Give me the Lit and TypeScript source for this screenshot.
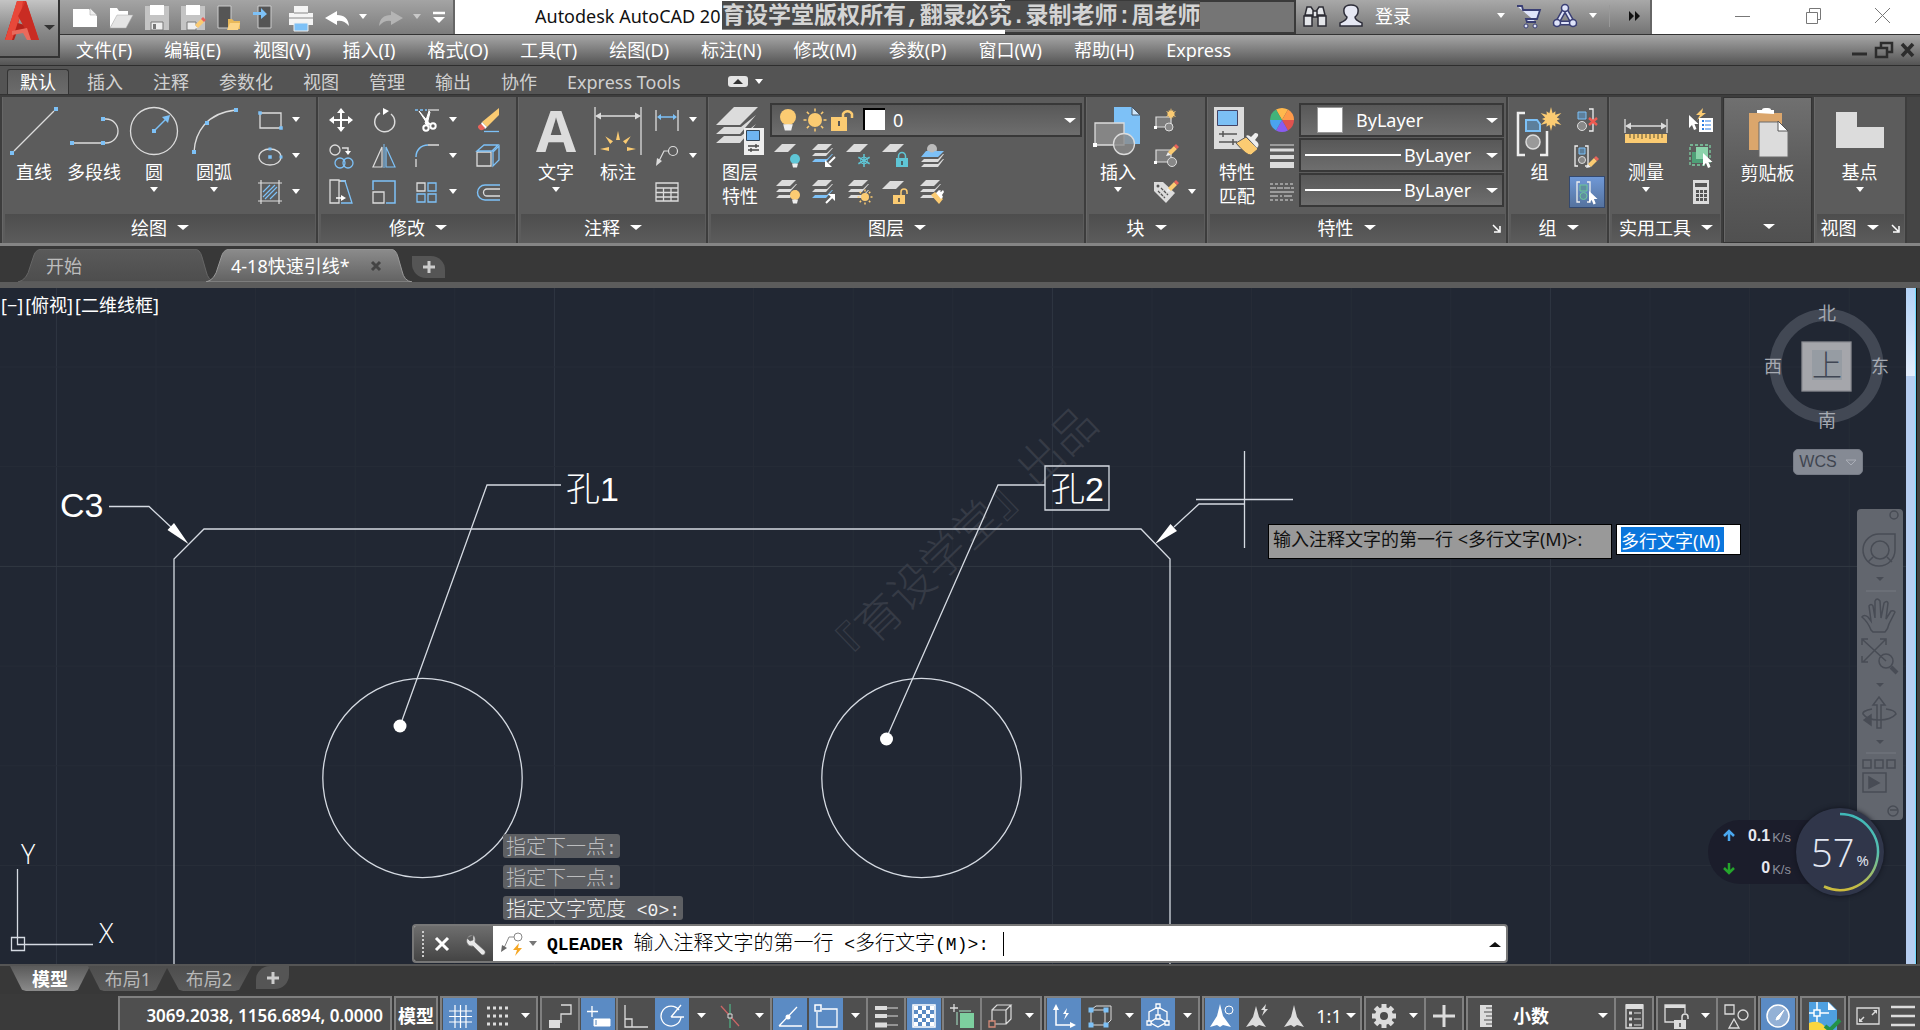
import { LitElement, html, svg, css, nothing, TemplateResult, SVGTemplateResult } from "lit";
import { customElement, state } from "lit/decorators.js";
import { classMap } from "lit/directives/class-map.js";

const W = "#dcdcdc";
const B = "#7dc1f7";
const Y = "#fbcb72";

const sq = (x: number, y: number, s = 4) =>
  svg`<rect x=${x - s / 2} y=${y - s / 2} width=${s} height=${s} fill=${B}/>`;

const sheet = (x: number, y: number, fill = W, w = 14) =>
  svg`<path d="M${x + 6} ${y}h${w}l-8 8h-${w}z" fill=${fill}/>`;

const stack = (x: number, y: number, mid = W, low = W) => svg`
  <path d="M${x + 6} ${y}h14l-6 6h-14z" fill=${W}/>
  <path d="M${x} ${y + 12}l3-3h12l5-5h1l-7 8z" fill=${mid}/>
  <path d="M${x} ${y + 18}l3-3h12l5-5h1l-7 8z" fill=${low}/>`;

const pencil = (x: number, y: number) => svg`
  <path d="M${x} ${y + 12}l2-4 3 3z" fill="#eee"/>
  <path d="M${x + 2} ${y + 8}l6-6 3 3-6 6z" fill=${Y}/>
  <path d="M${x + 8} ${y + 2}l2-2 3 3-2 2z" fill="#e8635a"/>`;

const cursor = (x: number, y: number, s = 1) =>
  svg`<path transform="translate(${x} ${y}) scale(${s})" d="M0 0v13l3-3 2 5 2.500-1-2-5h4z" fill="#fff"/>`;

const burst = (cx: number, cy: number, r: number) => {
  const pts: string[] = [];
  for (let i = 0; i < 24; i++) {
    const q = i % 2 ? r * 0.5 : i % 4 ? r * 0.75 : r;
    const a = (i * Math.PI) / 12;
    pts.push(`${(cx + q * Math.sin(a)).toFixed(1)},${(cy - q * Math.cos(a)).toFixed(1)}`);
  }
  return svg`<polygon points=${pts.join(" ")} fill=${Y}/>`;
};

const sun = (cx: number, cy: number, r: number, ray: number) => svg`
  <circle cx=${cx} cy=${cy} r=${r} fill=${Y}/>
  ${[0, 45, 90, 135, 180, 225, 270, 315].map(
    (a) => svg`<path d="M${cx} ${cy - r - 1.5}v-${ray}" stroke=${Y} stroke-width="1.500" transform="rotate(${a} ${cx} ${cy})"/>`
  )}`;

const lock = (x: number, y: number, c: string, open = false) => svg`
  <rect x=${x} y=${y + 6} width="12" height="9" fill=${c}/>
  <path d=${open ? `M${x + 8} ${y + 6}v-3a3 3 0 0 1 6 0v2` : `M${x + 2.5} ${y + 6}v-2a3.500 3.500 0 0 1 7 0v2`} fill="none" stroke=${c} stroke-width="1.500"/>
  <path d="M${x + 6} ${y + 9}v4" stroke="#444" stroke-width="1.500"/>`;

const bulb = (cx: number, cy: number, r: number, c: string) => svg`
  <circle cx=${cx} cy=${cy} r=${r} fill=${c}/>
  <path d="M${cx - r * 0.6} ${cy + r * 0.9}h${r * 1.2}l-${r * 0.2} ${r * 0.8}h-${r * 0.8}z" fill="#eee"/>`;

const bracketPair = (x: number, y: number, h: number) => svg`
  <path d="M${x + 4} ${y}h-3v${h}h3M${x + 11} ${y}h3v${h}h-3" fill="none" stroke="#eee" stroke-width="1.300"/>`;

const ICONS: Record<string, SVGTemplateResult> = {
  line: svg`<path d="M4 44L44 4" stroke=${W} stroke-width="1.300"/>${sq(46, 2)}${sq(2, 46)}`,
  pline: svg`<path d="M2 36h31M34 12h2a12 12 0 0 1 0 24h-2" fill="none" stroke=${W} stroke-width="1.300"/>${sq(2, 36)}${sq(33, 36)}${sq(33, 12)}`,
  circle: svg`<circle cx="24" cy="24" r="23.500" fill="none" stroke=${W} stroke-width="1.300"/>
    <path d="M24 24L36 12" stroke=${B} stroke-width="1.500"/><path d="M40 8l-2 8-6-6z" fill=${B}/>${sq(24, 24)}`,
  arc: svg`<path d="M4 45C5 26 16 6 46 3" fill="none" stroke=${W} stroke-width="1.300"/>${sq(4, 45)}${sq(17, 16)}${sq(46, 3)}`,
  rect: svg`<path d="M2 5h21v15H2z" fill="none" stroke=${W} stroke-width="1.300"/>${sq(2, 5, 3.5)}${sq(23, 20, 3.5)}`,
  ellipse: svg`<ellipse cx="12" cy="13" rx="11" ry="8" fill="none" stroke=${W} stroke-width="1.300"/>${sq(12, 5, 3)}${sq(12, 13, 3.5)}${sq(23, 13, 3)}`,
  hatch: svg`<path d="M0 3h24M0 21h24M3 0v24M21 0v24" stroke=${W} stroke-width="1.200"/>
    <path d="M5 12l7-7M5 17L17 5M7 19L19 7M12 19l7-7" stroke=${B} stroke-width="1.200"/>`,
  move: svg`<path d="M12 3v18M3 12h18" stroke="#fff" stroke-width="2"/>
    <path d="M12 0l4 5H8zM12 24l4-5H8zM0 12l5-4v8zM24 12l-5-4v8z" fill="#fff"/>`,
  rotate: svg`<path d="M8 5A10 10 0 1 0 19 6" fill="none" stroke=${W} stroke-width="1.500"/><path d="M11 0l6 3-6 4z" fill="#fff"/>`,
  trim: svg`<path d="M0 2h12" stroke=${B} stroke-width="1.300" stroke-dasharray="3 2"/><path d="M13 2h11" stroke=${W} stroke-width="1.300"/>
    <path d="M4 3l11 13-2 1zM14 3l1 1-3 13-2-2z" fill="#fff" stroke="#fff"/><circle cx="11" cy="20" r="2.700" fill="none" stroke="#fff" stroke-width="2"/><circle cx="18" cy="18" r="2.700" fill="none" stroke="#fff" stroke-width="2"/>`,
  erase: svg`<path d="M23 0v7l-12 12-5-5z" fill=${Y}/><path d="M6 14l5 5-2 2-4-5z" fill="#fff"/><path d="M5 16l4 4q-3 4-6 1t2-5z" fill="#e8635a"/><path d="M8 23.500h15" stroke=${B} stroke-width="1.300"/>`,
  copy: svg`<circle cx="6" cy="6" r="5" fill="none" stroke=${W} stroke-width="1.300"/><path d="M13 4h6v4" fill="none" stroke=${W} stroke-width="1.500"/><path d="M16 7h6l-3 4z" fill="#fff"/>
    <circle cx="11" cy="19" r="5" fill="none" stroke=${B} stroke-width="1.300"/><circle cx="19" cy="19" r="5" fill="none" stroke=${B} stroke-width="1.300"/>`,
  mirror: svg`<path d="M10 3v20H1z" fill="none" stroke=${W} stroke-width="1.200"/><path d="M14 3v20h9z" fill="none" stroke=${B} stroke-width="1.200"/><path d="M12 0v24" stroke=${B}/>`,
  fillet: svg`<path d="M1 13C1 6 6 1 13 1" fill="none" stroke=${B} stroke-width="1.500"/><path d="M13 1h11M1 15v8" stroke=${W} stroke-width="1.300"/>`,
  explode: svg`<path d="M1 8h14v14H1z" fill="none" stroke=${W} stroke-width="1.300"/><path d="M1 7l7-6h14l-6 6zM17 8l6-6v14l-6 6z" fill="none" stroke=${B} stroke-width="1.300"/>`,
  stretch: svg`<path d="M10 0H1v23h9zM10 1h7" fill="none" stroke=${W} stroke-width="1.300"/><path d="M12 1h4l7 22H12" fill="none" stroke=${B} stroke-width="1.300"/><path d="M7 18h6" stroke="#fff" stroke-width="1.500"/><path d="M12 15l5 3-5 3z" fill="#fff"/>`,
  scale: svg`<path d="M1 10V1h22v22H14" fill="none" stroke=${B} stroke-width="1.500"/><path d="M1 12h11v11H1z" fill="none" stroke=${W} stroke-width="1.300"/>`,
  array: svg`<path d="M2 3h8v8H2z" fill="none" stroke=${W} stroke-width="1.300"/><path d="M13 3h8v8h-8zM2 14h8v8H2zM13 14h8v8h-8z" fill="none" stroke=${B} stroke-width="1.300"/>`,
  offset: svg`<path d="M24 5H9a7 7 0 0 0 0 15h15" fill="none" stroke=${B} stroke-width="1.400"/><path d="M24 9H11a3.500 3.500 0 0 0 0 7h13" fill="none" stroke=${W} stroke-width="1.300"/>`,
  mtext: svg`<text x="24" y="45" text-anchor="middle" class="glyph-a">A</text>`,
  dim: svg`<path d="M1 0v48M47 0v48M4 9h40" stroke=${W} stroke-width="1.300"/><path d="M1 9l6-3.500v7zM47 9l-6-3.500v7z" fill=${W}/>
    ${[-90, -45, 0, 45, 90].map((a) => svg`<path d="M24 24l2 9h-4z" transform="rotate(${a} 24 42)" fill=${Y}/>`)}`,
  dimlin: svg`<path d="M1 2v21M23 2v21" stroke=${W} stroke-width="1.300"/><path d="M4 9h16" stroke=${B} stroke-width="1.500"/><path d="M2 9l4-3v6zM22 9l-4-3v6z" fill=${B}/>`,
  leader: svg`<circle cx="18" cy="7" r="4.500" fill="none" stroke=${W} stroke-width="1.200"/><path d="M14 7H9L3 19" fill="none" stroke=${W} stroke-width="1.200"/><path d="M1 22l1-8 5 3z" fill=${W}/>`,
  table: svg`<path d="M1 3h22v18H1zM1 8h22M1 12.500h22M1 17h22M8.500 8v13M16 8v13" fill="none" stroke=${W} stroke-width="1.300"/>`,
  layers: svg`<path d="M18 0h24L24 18H0z" fill=${W}/><path d="M0 27l8-7h17l15-12-16 19z" fill=${W}/><path d="M0 36l8-7h17l15-12-16 19z" fill=${W}/>
    <path d="M28 21h20v27H28z" fill="#eee"/><path d="M30.500 23.500h13v10h-13z" fill="#6fb4f0" stroke="#345"/><path d="M32 39h11M32 43h11M40 37v4M35 41v4" stroke="#444" stroke-width="1.300"/>`,
  bulbBig: svg`${bulb(12, 9, 8, Y)}`,
  sunBig: svg`${sun(12, 12, 7, 3)}`,
  unlockBig: svg`<path d="M1 9h16v14H1z" fill=${Y}/><path d="M13 9V6a5 5 0 0 1 9 0v4" fill="none" stroke=${Y} stroke-width="2.500"/><path d="M9 13v5" stroke="#555" stroke-width="2"/>`,
  layOff: svg`${sheet(0, 0)}${bulb(19, 15, 5, "#5fc6d6")}`,
  layIso: svg`${stack(0, 0, W, B)}<path d="M23 13l-6 6" stroke="#fff" stroke-width="2"/><path d="M13 23v-7l7 7z" fill="#fff"/>`,
  layFrz: svg`${sheet(0, 0)}${[0, 60, 120].map((a) => svg`<path d="M16 10v13" transform="rotate(${a} 16 16.500)" stroke="#5fc6d6" stroke-width="1.500"/>`)}<circle cx="16" cy="16.500" r="3.500" fill="none" stroke="#5fc6d6"/>`,
  layLock: svg`${sheet(0, 0)}${lock(12, 8, "#5fc6d6")}`,
  layCur: svg`<circle cx="12" cy="5" r="5" fill="#bbb"/><path d="M1 13l5-6h3q3 3 6 0h9l-6 6z" fill=${B}/><path d="M1 18l3-3h14l5-5h1l-6 8zM1 23l3-3h14l5-5h1l-6 8z" fill=${W}/>`,
  layOn: svg`${stack(0, 0)}${bulb(19, 15, 5, Y)}`,
  layUniso: svg`${stack(0, 0, W, B)}<path d="M14 23l6-6" stroke="#fff" stroke-width="2"/><path d="M23 14v7l-7-7z" fill="#fff"/>`,
  layThw: svg`${stack(0, 0)}${sun(17, 17, 4, 2)}`,
  layUnlk: svg`${sheet(0, 1)}${lock(9, 9, Y, true)}`,
  layMatch: svg`${stack(0, 0)}<path d="M11 15l4-3 8 7-4 5z" fill=${Y}/><path d="M16 13l3-3 2 2 2-2 1 2-2 3 1 2-2 2z" fill="#fff"/>`,
  insert: svg`<path d="M20 0h18l8 8v29H20z" fill=${B}/><path d="M38 0v8h8z" fill="#cfe6fa" stroke="#456"/><path d="M1 16h29v22H1z" fill="#858585" stroke=${W} stroke-width="1.300"/>
    <circle cx="30" cy="37" r="10.500" fill="#8a8a8a" fill-opacity=".8" stroke=${W} stroke-width="1.300"/><path d="M-1 36h4v4h-4z" fill="#fff"/>`,
  blkNew: svg`<path d="M2 9h15v10H2z" fill="#7d7d7d" stroke=${W} stroke-width="1.200"/><circle cx="15" cy="19" r="4" fill="#888" stroke=${W}/><path d="M0 18h3v3H0z" fill="#fff"/>${burst(17, 6, 6)}`,
  blkEdit: svg`<path d="M2 6h15v12H2z" fill="#7d7d7d" stroke=${W} stroke-width="1.200"/><circle cx="18" cy="18" r="4.500" fill="#888" stroke=${W}/><path d="M0 17h3v3H0z" fill="#fff"/>${pencil(12, 0)}`,
  blkAttr: svg`<path d="M0 2h9l12 11-9 10L0 11z" fill=${W}/><circle cx="4" cy="6" r="1.500" fill="#555"/><path d="M4 11l7 7M7 8l7 7" stroke="#555" stroke-width="1.300" stroke-dasharray="3 1"/>${pencil(12, 0)}`,
  matchprop: svg`<path d="M1 0h30v42H1z" fill=${W}/><path d="M4.500 3.500h20v15h-20z" fill="#7cc0f5" stroke="#446"/><path d="M6 27h18M6 35h18M10 24v6M20 32v6" stroke="#555" stroke-width="1.500"/>
    <path d="M23 36l10-6 12 12-7 6q-4 1-15-12z" fill=${Y} stroke="#5a5a5a"/><path d="M33 29q2-2 5 1l4-4q4 0 3 3l-3 4q6 4 2 8z" fill="#eee"/>`,
  wheel: svg`${["#ffb84d", "#ff9a4a", "#e0534f", "#8a5cf0", "#4aa3f0", "#42b37a"].map((c, i) => {
    const a = ((i * 60 - 30) * Math.PI) / 180, b = ((i * 60 + 30) * Math.PI) / 180;
    return svg`<path d="M12 12L${12 + 12 * Math.sin(a)} ${12 - 12 * Math.cos(a)}A12 12 0 0 1 ${12 + 12 * Math.sin(b)} ${12 - 12 * Math.cos(b)}z" fill=${c}/>`;
  })}`,
  lweight: svg`<path d="M0 1h24" stroke=${W}/><path d="M0 6h24" stroke=${W} stroke-width="3"/><path d="M0 13h24" stroke=${W} stroke-width="4"/><path d="M0 21h24" stroke=${W} stroke-width="6"/>`,
  ltype: svg`<path d="M0 4h24" stroke=${W} stroke-dasharray="3 2"/><path d="M0 8h24" stroke=${W} stroke-dasharray="6 1"/><path d="M0 12h24" stroke=${W}/><path d="M0 16h24" stroke=${W} stroke-dasharray="8 2 2 2"/><path d="M0 20h24" stroke=${W} stroke-dasharray="3 2"/>`,
  group: svg`<path d="M9 6H2v42h7M24 48h7V24" fill="none" stroke="#eee" stroke-width="2.500"/><path d="M10 13h11l3 4v7H10z" fill="#5d7f9b" stroke=${B} stroke-width="2"/><circle cx="17" cy="35" r="7" fill="#999" stroke=${W} stroke-width="1.500"/>${burst(35, 12, 12)}`,
  ungroup: svg`<path d="M3 4h8v7H3z" fill="#5d7f9b" stroke=${B}/><circle cx="7" cy="18" r="4.500" fill="#888" stroke=${W}/><path d="M14 1h4v22h-4" fill="none" stroke="#eee" stroke-width="1.300"/><path d="M14 10l8 7M22 10l-8 7" stroke="#ee5a50" stroke-width="2.500"/>`,
  groupEdit: svg`${bracketPair(-1, 2, 20)}<path d="M4 4h6v6H4z" fill="#5d7f9b" stroke=${B}/><circle cx="7" cy="16" r="3.500" fill="#888" stroke=${W}/>${pencil(11, 12)}`,
  groupSel: svg`${bracketPair(1, 2, 20)}<path d="M5 5h7v6H5z" fill="#5f8fa0" stroke="#6cc79a"/><circle cx="8.500" cy="16" r="3.500" fill="#5f8fa0" stroke="#6cc79a"/>${cursor(14, 11, 0.9)}`,
  measure: svg`<path d="M3 12v14M45 12v14M6 19h36" stroke=${W} stroke-width="1.300"/><path d="M3 19l6-3.500v7zM45 19l-6-3.500v7z" fill=${W}/><path d="M3 27h42v9H3z" fill=${Y}/>
    <path d="M8 27v4M12 27v5M16 27v4M20 27v5M24 27v4M28 27v5M32 27v4M36 27v5M40 27v4" stroke="#5a5030"/>`,
  quick: svg`<path d="M14 0l-7 7h4l-3 5 9-7h-4z" fill=${Y}/>${cursor(0, 7)}<path d="M10 10h14v14H10z" fill="#fff"/><path d="M13 13h2M13 17h2M13 21h2" stroke="#2b7de0" stroke-width="2"/><path d="M16 13h6M16 17h6M16 21h6" stroke="#2b7de0"/>`,
  selall: svg`<path d="M1 1h20v20H1z" fill="none" stroke="#7ed0a4" stroke-dasharray="3 2" stroke-width="1.300"/><path d="M3 8h12v11H3z" fill="#4f9f77"/><path d="M7 3h12v12H7z" fill="#8bd3ab"/>${cursor(14, 9)}`,
  calc: svg`<path d="M4 0h16v24H4z" fill=${W}/><path d="M6 3h12v4H6z" fill="#555"/>${[10, 14, 18].map((y) => svg`<path d="M7 ${y}h3v3h-3zM11 ${y}h3v3h-3zM15 ${y}h3v3h-3z" fill="#555"/>`)}`,
  paste: svg`<path d="M5 5h33v37H5z" fill="#dba66c"/><path d="M13 5V2h5q0-2 3-2h3q3 0 3 2h3v4z" fill="#fff"/><path d="M15 14h20l9 9v26H15z" fill=${W} stroke="#6a6a6a"/><path d="M34 13v10h10z" fill="#fff" stroke="#555"/>`,
  base: svg`<path d="M0 5h21v15h27v21H0z" fill=${W}/>`,
  // quick access
  qnew: svg`<path d="M0 4h16l8 7v11H0z" fill="#fff"/><path d="M17 3l7 7h-7z" fill="#eee" stroke="#999" stroke-width=".5"/>`,
  qopen: svg`<path d="M1 23V3h7l2 3h9v5H8z" fill="#fff"/><path d="M8 10h16l-7 13H1z" fill="#e4e4e4" stroke="#aaa" stroke-width=".5"/>`,
  qsave: svg`<path d="M0 1h24v24H0z" fill="#c4c4c4"/><path d="M5 0h14v10H5z" fill="#fff"/><path d="M6 17h12v8H6z" fill="#eee" stroke="#777"/><path d="M8 19h3v5H8z" fill="#777"/>`,
  qsaveas: svg`<path d="M0 1h24v24H0z" fill="#c4c4c4"/><path d="M5 0h14v10H5z" fill="#fff"/><path d="M6 17h9v8H6z" fill="#eee" stroke="#777"/>${pencil(12, 12)}`,
  qmobOpen: svg`<path d="M1 1h13v22H1z" fill="#555" stroke="#ccc"/><path d="M11 14h4l2 2h6v8H11z" fill="#e9b95a"/><path d="M13 18h10l-2 7H10z" fill="#fcd588"/>`,
  qmobSave: svg`<path d="M5 1h13v22H5z" fill="#555" stroke="#ccc"/><path d="M0 7h8V3l6 6-6 5v-4H0z" fill="#7dc1f7"/>`,
  qprint: svg`<path d="M5 1h14v8H5zM0 8h24v12H0z" fill="#f4f4f4" /><path d="M0 13h24M5 8h14" stroke="#888"/><path d="M5 18h14v8H5z" fill="#7dc1f7" stroke="#eee"/>`,
  qundo: svg`<path d="M0 13l12-7v4q11 0 12 11-5-6-12-5v4z" fill="#fff"/>`,
  qredo: svg`<path d="M24 13l-12-7v4q-11 0-12 11 5-6 12-5v4z" fill="#b4b4b4"/>`,
  qmore: svg`<path d="M6 8h12" stroke="#fff" stroke-width="2.500"/><path d="M6 12h12l-6 6z" fill="#fff"/>`,
  binoc: svg`<g stroke="#2c2c34" stroke-width="1.500" fill="#e4e6ea"><path d="M4 3h4l2 3v5H2zM16 3h4l2 8h-8V6zM10 7h4v6h-4zM1 12h8v10H1zM15 12h8v10h-8z"/></g>`,
  person: svg`<path d="M8 13q-4-3-3-8 1-4 7-4t7 4q1 5-3 8 0 3 7 6v3H1v-3q7-3 7-6z" fill="#e6e8f4" stroke="#2c2c38" stroke-width="1.500"/>`,
  cart: svg`<path d="M0 2h5l1 4h17l-3 9H9l1 3h9" fill="#dfe4fa" stroke="#3a3f74" stroke-width="1.800"/><circle cx="9" cy="22" r="2" fill="#dfe4fa" stroke="#3a3f74"/><circle cx="18" cy="22" r="2" fill="#dfe4fa" stroke="#3a3f74"/>`,
  a360: svg`<g stroke="#3a3f74" stroke-width="1.500" fill="#dfe4fa"><path fill="none" stroke-width="5" d="M12 5L4 19h16z"/><path fill="none" stroke="#dfe4fa" stroke-width="2" d="M12 5L4 19h16z"/><circle cx="12" cy="4" r="3.500"/><circle cx="4" cy="19" r="3.500"/><circle cx="20" cy="19" r="3.500"/></g>`,
  more2: svg`<path d="M7 7l5 5-5 5zM13 7l5 5-5 5z" fill="#111"/>`,
  winMin: svg`<path d="M4 12.500h15" stroke="#777"/>`,
  winMax: svg`<path d="M5.500 8.500h11v11h-11zM8.500 8V4.500h11v11H17" fill="none" stroke="#777"/>`,
  winX: svg`<path d="M4 4l15 15M19 4L4 19" stroke="#777"/>`,
  mdiMin: svg`<path d="M4 16h15" stroke="#2c2c2c" stroke-width="3"/>`,
  mdiMax: svg`<path d="M4 10h11v9H4zM9 9V5h11v9h-4" fill="none" stroke="#2c2c2c" stroke-width="2.500"/>`,
  mdiX: svg`<path d="M6 6l11 12M17 6L6 18" stroke="#2c2c2c" stroke-width="3.500"/>`,
  // status bar
  grid: svg`<path d="M7 1v23M12.500 1v23M18 1v23M1 7h23M1 12.500h23M1 18h23" stroke="#fff" stroke-width="1.200"/>`,
  snap: svg`${[4, 12, 20].map((y) => svg`<path d="M3 ${y}h3M9 ${y}h3M15 ${y}h3M21 ${y}h3" stroke=${W} stroke-width="3"/>`)}`,
  infer: svg`<path d="M13 1h10v9H13v9" fill="none" stroke=${W} stroke-width="1.300"/><path d="M1 16h11v8H1z" fill=${W}/>`,
  dyn: svg`<path d="M6 2v11M1 7.500h11" stroke="#fff" stroke-width="1.300"/><path d="M8 15h16v7H8z" fill="#fff" stroke="#fff"/><path d="M10 16v5" stroke="#4f81b8"/>`,
  ortho: svg`<path d="M1 1v22h23M1 15h7v8" fill="none" stroke=${W} stroke-width="1.300"/>`,
  polar: svg`<path d="M19 6a10 10 0 1 0 2 7" fill="none" stroke="#fff" stroke-width="1.300"/><path d="M11 13h13M11 13L21 1" stroke="#fff" stroke-width="1.300"/>`,
  iso: svg`<path d="M12 0v24" stroke="#4fae82" stroke-width="1.300"/><path d="M3 2l18 20" stroke="#c66" stroke-width="1.300"/><path d="M10 10h4v4h-4z" fill="#4c4c4c" stroke=${W}/>`,
  otrack: svg`<path d="M1 22L19 3M1 22h23" stroke="#fff" stroke-width="1.300"/><circle cx="10" cy="13" r="2.500" fill="#fff"/>`,
  osnap: svg`<path d="M8 5h15v18H3V8" fill="none" stroke="#fff" stroke-width="1.300"/><path d="M1 1h6v6H1z" fill="none" stroke="#fff" stroke-width="1.500"/>`,
  lwt: svg`<path d="M1 4h12M1 12h12" stroke=${W} stroke-width="4"/><path d="M1 21h12" stroke=${W} stroke-width="5"/><path d="M13 4h11M13 12h11M13 21h11" stroke=${W}/>`,
  transp: svg`<path d="M1 1h22v22H1z" fill="none" stroke="#fff" stroke-width="1.500"/>${[0, 1, 2, 3, 4].map((r) => [0, 1, 2, 3, 4].map((c) => ((r + c) % 2 ? nothing : svg`<rect x=${2 + c * 4} y=${2 + r * 4} width="4" height="4" fill="#fff"/>`)))}`,
  cycle: svg`<path d="M4 0v8M0 4h8" stroke=${W} stroke-width="1.300"/><path d="M9 6h12v2H9zM6 8h2v13H6z" fill="#7d9d8d"/><path d="M10 9h14v15H10z" fill="#7dcf9f"/>`,
  cube: svg`<path d="M4 6h14v14H4zM4 6l5-5h14l-5 5M23 1v14l-5 5" fill="none" stroke=${W} stroke-width="1.200"/><path d="M1 17h6v6H1z" fill="#4c4c4c" stroke="#d58a78" stroke-width="1.300"/>`,
  ducs: svg`<path d="M4 4v17h16" fill="none" stroke="#fff" stroke-width="1.500"/><path d="M4 0l3 6H1zM24 21l-6-3v6z" fill="#fff"/><path d="M15 4l-4 6h3l-2 6 5-7h-3z" fill="#fff"/>`,
  filt: svg`<path d="M3 6h14v15H3zM3 6l5-4h15v14l-5 5" fill="none" stroke=${W}/>${sq(3, 6, 5)}${sq(18, 6, 5)}${sq(3, 21, 5)}${sq(18, 21, 5)}`,
  gizmo: svg`<path d="M12 3L3 8v10l9 5 9-5V8zM12 3v9M12 13l-9 6M12 13l9 6" fill="none" stroke="#fff" stroke-width="1.300"/><path d="M10 0h4v4h-4zM1 17h4v4H1zM19 17h4v4h-4zM10 11h4v4h-4z" fill="#5a8ac0" stroke="#fff" stroke-width="1.300"/>`,
  annoVis: svg`<path d="M10 0l3 12 8 11-8-2-3 2-3-2-7 2 7-11z" fill="#fff"/><circle cx="19" cy="6" r="4" fill="none" stroke="#fff"/>`,
  annoAuto: svg`<path d="M10 2l3 11 7 10-7-2-3 2-3-2-7 2 7-10z" fill=${W}/><path d="M20 0l-5 6h3l-2 6 6-7h-3z" fill=${W}/>`,
  anno: svg`<path d="M12 1l3 12 7 10-7-2-3 2-3-2-7 2 7-10z" fill=${W}/>`,
  gear: svg`${[0, 45, 90, 135].map((a) => svg`<path d="M12 0v24" transform="rotate(${a} 12 12)" stroke=${W} stroke-width="5"/>`)}<circle cx="12" cy="12" r="6.500" fill="#4c4c4c" stroke=${W} stroke-width="5"/>`,
  plus: svg`<path d="M12 1v22M1 12h22" stroke=${W} stroke-width="3"/>`,
  ruler: svg`<path d="M6 1h12v22H6z" fill=${W}/><path d="M12 4h6M10 8h8M12 12h6M10 16h8M12 20h6" stroke="#4c4c4c"/>`,
  props: svg`<path d="M4 1h17v23H4z" fill="none" stroke=${W} stroke-width="1.300"/><path d="M4 0h17v5H4z" fill=${W}/><path d="M7 9h3M7 15h3M7 21h3" stroke=${W} stroke-width="3"/><path d="M12 9h7M12 15h7M12 21h7" stroke=${W}/>`,
  uilock: svg`<path d="M12 18H1V1h20v8" fill="none" stroke=${W} stroke-width="1.300"/><path d="M1 1h20v3H1z" fill=${W}/>${lock(10, 10, W, true)}`,
  isolate: svg`<path d="M1 1h9v9H1z" fill="none" stroke=${W} stroke-width="1.300"/><circle cx="19" cy="11" r="5" fill="none" stroke=${W} stroke-width="1.300"/><path d="M10 15l5 9H5z" fill="none" stroke=${W} stroke-width="1.300"/>`,
  perf: svg`<circle cx="12" cy="12" r="11" fill="#93b1d6" stroke="#fff" stroke-width="1.500"/><path d="M18 6l-5 9-3 1 1-3z" fill="#fff" stroke="#fff"/>`,
  trusted: svg`<path d="M-2 -2h20l8 8v20H-2z" fill="#4fa0e0"/><path d="M17 -2v8h8z" fill="#fff"/><path d="M-2 19q12-5 20 9H-2z" fill="#fbd63e"/><path d="M6-2v20M-2 9h20" stroke="#fff" stroke-width="1.500"/><path d="M3 6h6v6H3z" fill="#4fa0e0" stroke="#fff" stroke-width="1.500"/><path d="M14 22l5 4 10-10" fill="none" stroke="#23934a" stroke-width="4"/>`,
  clean: svg`<path d="M1 4h22v16H1z" fill="none" stroke=${W} stroke-width="1.300"/><path d="M17 6h4v4zM3 14v4h4z" fill=${W}/><path d="M20 7l-4 4M4 17l4-4" stroke=${W} stroke-width="1.500"/>`,
  burger: svg`<path d="M0 3h24M0 12h24M0 21h24" stroke=${W} stroke-width="2.500"/>`,
  // command line
  close: svg`<path d="M6 6l12 12M18 6L6 18" stroke="#fff" stroke-width="3"/>`,
  wrench: svg`<path d="M9 3a6 6 0 0 0-6 8q2 4 6 3l9 9q4 0 3-4L11 10q1-5-2-7l0 5-3 1-3-3z" fill="#e8e8e8" stroke="#666" stroke-width=".6"/>`,
  cmd: svg`<circle cx="17" cy="5" r="4" fill="none" stroke="#888"/><path d="M13 5H8L3 16" fill="none" stroke="#888"/><path d="M0 20l1-7 5 3z" fill="#666"/><path d="M18 11l-6 7h4l-2 6 7-8h-4z" fill="#f5a623"/>`,
};

const icon = (name: string, size = 24, cls = ""): TemplateResult => html`<svg
  class="ico ${cls}" width=${size} height=${size} viewBox="0 0 ${size} ${size}" aria-hidden="true">${ICONS[name]}</svg>`;

const caret = (size = 8, fill = "#fff", cls = ""): TemplateResult => html`<svg
  class="ico ${cls}" width=${size} height="6" viewBox="0 0 8 6" preserveAspectRatio="none" aria-hidden="true"><path d="M0 0h8L4 5z" fill=${fill}/></svg>`;

const GX = Array.from({ length: 19 }, (_, n) => 56.4 + n * 99.6);
const GY = Array.from({ length: 6 }, (_, n) => 367 + n * 99.7);

const MENUS = ["文件(F)", "编辑(E)", "视图(V)", "插入(I)", "格式(O)", "工具(T)", "绘图(D)", "标注(N)", "修改(M)", "参数(P)", "窗口(W)", "帮助(H)", "Express"];
const TABS = ["默认", "插入", "注释", "参数化", "视图", "管理", "输出", "协作", "Express Tools"];

interface Cell { i: string; on?: boolean; menu?: boolean; sep?: boolean; label: string }

const MODES: Cell[] = [
  { i: "infer", label: "推断约束" },
  { i: "dyn", label: "动态输入", on: true, sep: true },
  { i: "ortho", label: "正交模式", sep: true },
  { i: "polar", label: "极轴追踪", on: true, menu: true },
  { i: "iso", label: "等轴测草图", menu: true },
  { i: "otrack", label: "对象捕捉追踪", on: true, sep: true },
  { i: "osnap", label: "对象捕捉", on: true, menu: true },
  { i: "lwt", label: "线宽", sep: true },
  { i: "transp", label: "透明度", on: true, sep: true },
  { i: "cycle", label: "选择循环", sep: true },
  { i: "cube", label: "三维对象捕捉", menu: true, sep: true },
];

@customElement("app-root")
export class AppRoot extends LitElement {
  @state() private tab = "默认";

  static styles = css`
    :host { display: block; font: 18px/24px "Noto Sans", "Noto Sans CJK SC", sans-serif; color: #fff; }
    * { box-sizing: border-box; }
    button, select, input { font: inherit; color: inherit; background: none; border: 0; padding: 0; margin: 0; appearance: none; border-radius: 0; }
    button { display: flex; align-items: center; justify-content: center; white-space: nowrap; cursor: default; }
    .ico { display: block; flex: none; overflow: visible; }
    .app { display: flex; flex-direction: column; height: 100vh; overflow: hidden; background: #3a3a3a; }

    .head { display: grid; grid-template-columns: 60px 1fr; grid-template-rows: 34px 31px; position: relative; border-bottom: 1px solid #2e2e2e; }
    .logo { grid-area: 1 / 1 / 3 / 2; height: 58px; align-self: start; z-index: 1; gap: 4px; background: linear-gradient(#c4c4c4, #8d8d8d 50%, #6b6b6b); border: 1px solid #333; border-width: 0 2px 2px 0; }
    .logo .mark-a { align-self: flex-start; }
    .title { grid-area: 1 / 2; display: flex; background: #fff; min-width: 0; }
    .qat { display: flex; align-items: center; gap: 12px; padding: 0 2px 0 13px; background: linear-gradient(#a4a4a4, #7c7c7c); border-right: 2px solid #666; }
    .qat .group { display: flex; align-items: center; gap: 10px; }
    .qat .tail { gap: 6px; }
    .name { flex: 1; display: flex; align-items: center; padding: 0 0 2px 80px; color: #111; margin: 0; font-size: 18px; font-weight: 400; white-space: nowrap; }
    .notice { position: absolute; left: 722px; top: 1px; height: 29px; padding-top: 3px; background: #4b4b4b; color: #d4d4d4; font: 700 23px/26px "Liberation Mono", "Noto Sans CJK SC", monospace; white-space: nowrap; border-bottom: 1px solid #888; }
    .search { width: 291px; background: #757575; border: 2px solid #3a3a3a; border-left-width: 0; }
    .info { width: 356px; display: flex; align-items: center; padding: 0 4px 2px 7px; background: linear-gradient(#a8a8a8, #747474); border-right: 2px solid #666; gap: 12px; }
    .info .login { flex: 1; justify-content: space-between; }
    .info .rule { border-left: 1px solid #999; height: 22px; }
    .win { width: 268px; display: flex; justify-content: flex-end; padding: 0 2px 2px 0; }
    .win button { width: 70px; }
    .menu { grid-area: 2 / 1 / 3 / 3; display: flex; gap: 32px; padding: 0 0 0 76px; background: linear-gradient(#a6a6a6, #7d7d7d 50%, #545454); border-top: 1px solid #333; }
    .menu .mdi { margin-left: auto; display: flex; }

    .tabs { display: flex; align-items: flex-end; height: 29px; padding-left: 7px; background: #545454; color: #d0d0d0; border-bottom: 1px solid #333; }
    .tab { padding: 0 15px; height: 25px; }
    .tab.sel { padding: 0 12px; margin-right: 3px; background: linear-gradient(#5e5e5e, #6c6c6c); color: #fff; border: 1px solid #333; border-bottom: 0; border-radius: 3px 3px 0 0; }
    .pill { margin-left: 32px; height: 25px; gap: 7px; }
    .pill .cap { width: 20px; height: 11px; border-radius: 3px; background: #e4e4e4; display: grid; place-items: center; }

    .ribbon { display: grid; grid-template-columns: 314fr 198fr 188fr 376fr 119fr 299fr 99fr 112fr 89fr 91fr 13fr; gap: 2px; padding: 2px 0 0 2px; background: #3d3d3d; border-bottom: 3px solid #858585; height: 151px; }
    .panel { display: flex; flex-direction: column; background: #5c5c5c; box-shadow: inset 1px 0 #676767; min-width: 0; }
    .body { flex: 1; display: flex; padding: 5px 2px 0; }
    .cap-bar { height: 28px; gap: 10px; margin: 0 1px 1px 3px; background: linear-gradient(#4d4d4d, #5b5b5b); position: relative; }
    .cornered .cap-bar { padding-right: 22px; }
    .cap-bar .corner { position: absolute; right: 4px; top: 10px; }
    .end { background: #454545; }
    .raised { background: linear-gradient(#707070, #5c5c5c 50%, #505050); border: 1px solid #333; }
    .raised .cap-bar { background: none; }
    .center { justify-content: center; }

    .big { flex-direction: column; justify-content: flex-start; align-items: center; width: 60px; padding-top: 5px; }
    .big .lab { margin-top: 5px; white-space: pre; }
    .big .ico + .lab + .ico { margin-top: 3px; }
    .wide { width: 62px; }
    .slim { width: 56px; }
    .cells { display: grid; grid-auto-rows: 36px; align-content: start; }
    .c1 .cell { width: 34px; }
    .split { display: flex; }
    .cell { width: 36px; height: 36px; }
    .drop { width: 16px; height: 36px; }
    .mod { grid-template-columns: 36px 36px 54px 36px; column-gap: 7px; padding-left: 3px; }
    .draw { padding-left: 8px; }
    .inset { padding: 5px 2px 0 7px; }
    .spread { justify-content: space-between; }
    .selcell { background: linear-gradient(#6f98d6, #55739f); border: 1px solid #34496e; height: 32px; margin-top: 2px; }
    .lay { flex: 1; padding-top: 1px; }
    .row { display: flex; }
    .combo { display: flex; align-items: center; height: 34px; position: relative; background: linear-gradient(#585858, #6e6e6e); border: 2px solid #383838; margin-bottom: 1px; padding-left: 4px; }
    .combo select { flex: 1; min-width: 0; height: 30px; padding-left: 8px; }
    .combo select option { color: #111; }
    .combo .arrow { position: absolute; right: 4px; top: 13px; pointer-events: none; }
    .combo .ico + .ico { margin-left: 3px; }
    .combo .chip { width: 20px; height: 20px; background: #fff; box-shadow: -1px -1px 0 1px #000; margin-left: 11px; }
    .props { flex: 1; padding-top: 1px; }
    .props .chip { width: 24px; height: 24px; box-shadow: 0 0 0 1px #999; margin: 0 6px 0 13px; }
    .props .ln { width: 96px; height: 2px; background: #fff; }
    .props .thin select { padding-left: 3px; }
    .glyph-a { font: 700 58px "Open Sans", sans-serif; fill: #dcdcdc; }

    .files { display: flex; height: 36px; padding: 3px 0 0 18px; background: #383838; align-items: flex-end; }
    .ftab { position: relative; width: 198px; height: 33px; padding: 0 28px; justify-content: flex-start; gap: 20px; color: #bdbdbd; }
    .ftab + .ftab { width: 206px; margin-left: -10px; padding: 0 25px; color: #fff; }
    .ftab .shape { position: absolute; inset: 0; }
    .ftab span { position: relative; }
    .add { position: relative; width: 33px; height: 22px; background: #555; color: #c4c4c4; }
    .files .add { border-radius: 0 14px 0 14px; margin-bottom: 4px; }
    .strip { height: 6px; background: #5c5c5c; }

    .stage { flex: 1; min-height: 0; display: flex; background: #212733; position: relative; overflow: hidden; }
    .draw-area { flex: 1; position: relative; overflow: hidden; }
    .dwg { position: absolute; left: 0; top: 0; display: block; }
    .dwg text { font-family: "Liberation Sans", "Noto Sans CJK SC", sans-serif; fill: #fff; }
    .note { font-size: 34px; font-weight: 300; }
    .axis { font-size: 27px; font-weight: 300; }
    .dwg .axis { font-family: "Open Sans", sans-serif; }
    .dwg .mark { font-size: 45px; fill: #363b46; font-weight: 300; }
    .dwg .compass { font-size: 18px; fill: #a6aab2; text-anchor: middle; }
    .dwg .face { font-size: 30px; fill: #3f4654; text-anchor: middle; font-weight: 300; }
    .scroll { width: 10px; background: linear-gradient(#b4d3f7, #e3edfb 13%, #b7cef0 13%); border-right: 1px solid #6fdcff; }
    .edge { width: 4px; background: #45433f; border-left: 1px solid #111; }
    .view { position: absolute; left: 1px; top: 5px; display: flex; gap: 2px; }
    .tip { position: absolute; left: 1268px; top: 236px; display: flex; gap: 4px; align-items: flex-start; }
    .tip label { width: 344px; height: 35px; padding: 2px 4px; background: #999; color: #111; border: 1px solid #000; white-space: nowrap; }
    .tip span { width: 125px; height: 31px; padding: 2px 4px; background: #fff; border: 1px solid #000; display: block; }
    .tip input { width: 103px; height: 25px; padding: 0; background: #0b76dc; color: #fff; display: block; }
    .wcs { position: absolute; right: 43px; top: 161px; width: 70px; height: 26px; border-radius: 5px; background: #858a94; color: #3f4550; font: 16px "Liberation Sans", sans-serif; gap: 8px; border: 1px solid #767b86; }
    .nav { position: absolute; right: 3px; top: 221px; width: 46px; height: 311px; background: #62666e; border-radius: 4px; }

    .speed { position: absolute; right: 22px; top: 520px; width: 176px; height: 88px; display: flex; align-items: center; }
    .rates { width: 108px; height: 64px; border-radius: 32px 0 0 32px; background: #1b1d2b; display: grid; grid-template-rows: 32px 32px; padding: 0 25px 0 15px; flex: none; }
    .rate { display: flex; align-items: center; justify-content: flex-end; font: 700 16px "Liberation Sans", sans-serif; color: #e8e8f0; gap: 2px; }
    .rate .ico { margin-right: auto; }
    .rate small { font-size: 13px; font-weight: 400; color: #8d8f9c; padding-top: 2px; }
    .dial { width: 88px; height: 88px; margin-left: -20px; border-radius: 50%; background: #30364a; box-shadow: 0 0 5px #10131c; position: relative; display: flex; align-items: center; justify-content: center; font: 300 38px "Liberation Sans Narrow", "Open Sans", sans-serif; color: #e4e8f2; gap: 2px; flex: none; }
    .dial small { font-size: 15px; padding-top: 16px; font-weight: 400; }
    .dial svg { position: absolute; inset: 0; }

    .hist { position: absolute; left: 503px; bottom: 44px; display: flex; flex-direction: column; gap: 7px; align-items: flex-start; }
    .hist p, .cmd p { margin: 0; font: 18px/24px "Liberation Mono", monospace; white-space: pre; }
    .hist p { background: #5d5f63; border-radius: 3px; padding: 0 3px; height: 24px; color: #bcbdbf; }
    .hist p:last-child { color: #f0f0f0; }
    .cjk { font-family: "Noto Sans CJK SC", sans-serif; font-size: 20px; line-height: 24px; font-weight: 300; }
    .cmd { position: absolute; left: 412px; bottom: 1px; width: 1096px; height: 39px; display: flex; border: 2px solid #777; border-radius: 4px; background: #fff; color: #000; align-items: center; overflow: hidden; }
    .grip { align-self: stretch; width: 79px; display: flex; align-items: center; gap: 6px; padding: 0 3px 0 8px; background: linear-gradient(#6e6e6e, #444); }
    .grip button + button { margin-left: 4px; }
    .dots { border-left: 2px dotted #ccc; height: 26px; }
    .cmd .pick { gap: 4px; margin: 0 10px 0 8px; }
    .cmd input { flex: 1; min-width: 0; height: 24px; padding-left: 12px; }
    .cmd .bar { width: 1px; height: 24px; background: #000; margin-left: 14px; }
    .cmd .up { margin-right: 5px; transform: rotate(180deg); }

    .layouts { display: flex; height: 30px; padding-left: 10px; background: #383838; border-top: 2px solid #555; align-items: flex-start; }
    .ltab { position: relative; width: 80px; height: 25px; color: #b8b8b8; margin-right: -2px; clip-path: polygon(0 0, 100% 0, 85% 95%, 80% 100%, 20% 100%, 15% 95%); background: linear-gradient(#4d4d4d, #5b5b5b); }
    .ltab.sel { background: linear-gradient(#5a5a5a, #8a8a8a); color: #fff; font-weight: 700; }
    .ltab:nth-child(3) { width: 86px; }
    .layouts .add { margin-left: 6px; height: 23px; border-radius: 14px 0 14px 0; }

    .status { display: flex; justify-content: flex-end; gap: 2px; height: 36px; padding-top: 2px; }
    .sbar { background: #3a3a3a; }
    .grp { display: flex; border: 2px solid #808080; border-bottom: 0; background: #4f4f4f; height: 34px; }
    .sc { width: 36px; height: 38px; padding-bottom: 2px; }
    .sc.on { box-shadow: inset 1px 0 #4f4f4f, inset -1px 0 #4f4f4f; background: #5b8bc4; }
    .sep { border-left: 2px solid #808080; width: 38px; }
    .sd { width: 22px; height: 38px; padding-bottom: 2px; }
    .coords { width: 274px; padding: 6px 7px 0 0; font-size: 17px; font-weight: 600; justify-content: flex-end; }
    .mdl { width: 40px; height: 38px; font-weight: 700; padding-bottom: 2px; }
    .ratio { width: 48px; height: 38px; gap: 4px; padding-bottom: 2px; }
    .units { position: relative; width: 110px; height: 36px; }
    .units select { width: 110px; height: 36px; padding: 0 0 0 9px; font-weight: 600; }
    .units option { color: #111; }
    .units .ico { position: absolute; right: 6px; top: 15px; pointer-events: none; }
    .tall { width: 42px; }
    .last { border-right: 0; }
    .last .sc { width: 35px; }
  `;

  private big(i: string, label: string, menu = false, cls = "") {
    return html`<button class="big ${cls}">${icon(i, 48)}<span class="lab">${label}</span>${menu ? caret() : nothing}</button>`;
  }
  private cell(i: string, label: string, menu = false) {
    return html`<div class="split"><button class="cell" aria-label=${label}>${icon(i)}</button>${
      menu ? html`<button class="drop" aria-label=${label + "选项"}>${caret()}</button>` : nothing}</div>`;
  }
  private panel(title: string, body: TemplateResult, opt: { corner?: boolean; cls?: string; body?: string } = {}) {
    return html`<section class="panel ${opt.cls ?? ""} ${opt.corner ? "cornered" : ""}">
      <div class="body ${opt.body ?? ""}">${body}</div>
      <button class="cap-bar" aria-label=${title || "剪贴板"}>${title}${caret(12)}${opt.corner
        ? html`<svg class="corner" width="9" height="9" viewBox="0 0 9 9"><path d="M1 1l6 6M8 2v6H2" fill="none" stroke="#fff" stroke-width="1.500"/></svg>`
        : nothing}</button>
    </section>`;
  }

  private ribbon() {
    return html`<div class="ribbon">
      ${this.panel("绘图", html`${this.big("line", "直线")}${this.big("pline", "多段线")}${this.big("circle", "圆", true)}${this.big("arc", "圆弧", true)}
        <div class="cells draw">${this.cell("rect", "矩形", true)}${this.cell("ellipse", "椭圆", true)}${this.cell("hatch", "图案填充", true)}</div>`)}
      ${this.panel("修改", html`<div class="cells mod">
        ${this.cell("move", "移动")}${this.cell("rotate", "旋转")}${this.cell("trim", "修剪", true)}${this.cell("erase", "删除")}
        ${this.cell("copy", "复制")}${this.cell("mirror", "镜像")}${this.cell("fillet", "圆角", true)}${this.cell("explode", "分解")}
        ${this.cell("stretch", "拉伸")}${this.cell("scale", "缩放")}${this.cell("array", "阵列", true)}${this.cell("offset", "偏移")}</div>`)}
      ${this.panel("注释", html`${this.big("mtext", "文字", true, "wide")}${this.big("dim", "标注", false, "wide")}
        <div class="cells">${this.cell("dimlin", "线性", true)}${this.cell("leader", "引线", true)}${this.cell("table", "表格")}</div>`, { body: "inset" })}
      ${this.panel("图层", html`${this.big("layers", "图层\n特性")}
        <div class="lay">
          <div class="combo">${icon("bulbBig")}${icon("sunBig")}${icon("unlockBig")}<span class="chip"></span>
            <select aria-label="图层"><option>0</option></select>${caret(12, "#fff", "arrow")}</div>
          <div class="row">${this.cell("layOff", "关")}${this.cell("layIso", "隔离")}${this.cell("layFrz", "冻结")}${this.cell("layLock", "锁定")}${this.cell("layCur", "置为当前")}</div>
          <div class="row">${this.cell("layOn", "打开所有图层")}${this.cell("layUniso", "取消隔离")}${this.cell("layThw", "解冻")}${this.cell("layUnlk", "解锁")}${this.cell("layMatch", "匹配图层")}</div>
        </div>`)}
      ${this.panel("块", html`${this.big("insert", "插入", true)}
        <div class="cells">${this.cell("blkNew", "创建")}${this.cell("blkEdit", "编辑")}${this.cell("blkAttr", "编辑属性", true)}</div>`)}
      ${this.panel("特性", html`${this.big("matchprop", "特性\n匹配", false, "slim")}
        <div class="cells c1">${this.cell("wheel", "颜色")}${this.cell("lweight", "线宽")}${this.cell("ltype", "线型")}</div>
        <div class="props">
          <div class="combo"><span class="chip"></span><select aria-label="对象颜色"><option>ByLayer</option></select>${caret(12, "#fff", "arrow")}</div>
          <div class="combo thin"><span class="ln"></span><select aria-label="线宽"><option>ByLayer</option></select>${caret(12, "#fff", "arrow")}</div>
          <div class="combo thin"><span class="ln"></span><select aria-label="线型"><option>ByLayer</option></select>${caret(12, "#fff", "arrow")}</div>
        </div>`, { corner: true })}
      ${this.panel("组", html`${this.big("group", "组")}
        <div class="cells">${this.cell("ungroup", "解除编组")}${this.cell("groupEdit", "组编辑")}<button class="cell selcell" aria-label="启用组选择">${icon("groupSel")}</button></div>`)}
      ${this.panel("实用工具", html`${this.big("measure", "测量", true)}
        <div class="cells">${this.cell("quick", "快速选择")}${this.cell("selall", "全部选择")}${this.cell("calc", "快速计算器")}</div>`, { body: "inset spread" })}
      ${this.panel("", this.big("paste", "剪贴板"), { cls: "raised", body: "center" })}
      ${this.panel("视图", this.big("base", "基点", true), { corner: true, body: "center" })}
      <div class="end"></div>
    </div>`;
  }

  private head() {
    const q = (i: string, l: string) => html`<button aria-label=${l}>${icon(i)}</button>`;
    return html`<header class="head">
      <button class="logo" aria-label="应用程序菜单">
        <svg width="36" height="42" viewBox="0 0 36 42" class="ico mark-a"><path d="M13 1h9l13 39h-8l-9-29-9 29H1z" fill="#d9352a"/><path d="M1 40l6-19 17 5-1 7-10-1-3 8z" fill="#b3221b"/><path d="M13 1h6l-2 12-9 27H1z" fill="#e8483a"/><path d="M22 1l13 39h-8L14 16z" fill="#c92c23"/><path d="M8 31l15-3 4 12h-4l-4-7-11 2z" fill="#e96a5c"/></svg>
        ${caret(11, "#333")}
      </button>
      <div class="title">
        <div class="qat">${q("qnew", "新建")}${q("qopen", "打开")}${q("qsave", "保存")}${q("qsaveas", "另存为")}${q("qmobOpen", "从移动设备打开")}${q("qmobSave", "保存到移动设备")}${q("qprint", "打印")}
          <div class="group">${q("qundo", "放弃")}<button aria-label="放弃列表">${caret()}</button></div>
          <div class="group tail"><div class="group">${q("qredo", "重做")}<button aria-label="重做列表">${caret(8, "#c8c8c8")}</button></div>${q("qmore", "自定义")}</div></div>
        <h1 class="name">Autodesk AutoCAD 20</h1>
        <input class="search" aria-label="搜索">
        <div class="info">${q("binoc", "查找")}${q("person", "账户")}<button class="login">登录${caret()}</button>${q("cart", "应用商店")}${q("a360", "A360")}
          <button aria-label="A360 选项">${caret()}</button><span class="rule"></span>${q("more2", "更多")}</div>
        <div class="win"><button aria-label="最小化">${icon("winMin")}</button><button aria-label="还原">${icon("winMax")}</button><button aria-label="关闭">${icon("winX")}</button></div>
      </div>
      <div class="notice">育设学堂版权所有,翻录必究.录制老师:周老师</div>
      <nav class="menu">${MENUS.map((m) => html`<button>${m}</button>`)}
        <div class="mdi">${q("mdiMin", "最小化图形")}${q("mdiMax", "还原图形")}${q("mdiX", "关闭图形")}</div></nav>
    </header>`;
  }

  private drawing() {
    return html`<svg class="dwg" width="1906" height="676" viewBox="0 288 1906 676" fill="none" stroke="#d5dae2" stroke-width="1.300">
      <g stroke-width="1">
        ${GX.map((x, n) => svg`<path d="M${x} 288V964" stroke=${n % 5 ? "#272d38" : "#303642"}/>`)}
        ${GY.map((y, n) => svg`<path d="M0 ${y}H1906" stroke=${n === 2 ? "#323843" : "#272d38"}/>`)}
      </g>
      <text class="mark" x="960" y="556" text-anchor="middle" stroke="none" transform="rotate(-44 960 540)">『育设学堂』出品</text>
      <path d="M174 964V559L204 529H1141L1170 559V964"/>
      <circle cx="422.500" cy="778" r="99.700"/><circle cx="921.500" cy="778" r="99.700"/>
      <path d="M561 485H487L400 726M1045 485H998L886 739"/>
      <circle cx="400" cy="726" r="6.500" fill="#fff" stroke="none"/><circle cx="886.500" cy="739" r="6.500" fill="#fff" stroke="none"/>
      <path d="M109 506.500H149L172 528M1244 504H1199L1174 527"/>
      <path d="M188.500 544l-21-14 6.500-7zM1155 544l15.500-20 6.500 7z" fill="#fff" stroke="none"/>
      <path d="M1045 466h64v44h-64zM1244.500 451v97M1196 499.500h97"/>
      <path d="M17.500 869v75.500H93M11.500 937.500h13v13h-13z"/>
      <g stroke="none">
        <text class="note" x="60" y="517">C3</text><text class="note" x="566" y="501">孔1</text><text class="note" x="1051" y="501">孔2</text>
        <text class="axis" x="21" y="864">Y</text><text class="axis" x="99" y="943">X</text>
      </g>
      <circle cx="1826.500" cy="366" r="51" stroke="#424854" stroke-width="12"/>
      <rect x="1802" y="342" width="49" height="49" fill="#a5a6ab" stroke="#8a8c92"/><rect x="1812" y="350" width="30" height="30" fill="#969ca3" stroke="none"/>
      <g stroke="none"><text class="face" x="1827" y="376">上</text>
        <text class="compass" x="1827" y="320">北</text><text class="compass" x="1827" y="427">南</text><text class="compass" x="1773" y="373">西</text><text class="compass" x="1880" y="373">东</text></g>
    </svg>`;
  }

  private navbar() {
    return html`<svg class="nav" viewBox="1857 509 46 311" fill="none" stroke="#484c55" stroke-width="1.500">
      <circle cx="1894" cy="515" r="4"/><path d="M1880 534h15v16a16 16 0 1 1-15-16z"/><circle cx="1880" cy="550" r="9"/><path d="M1868 562l5-5M1892 562l-5-5"/>
      <path d="M1876 577h8l-4 4zM1876 683h8l-4 4zM1876 740h8l-4 4z" fill="#484c55" stroke="none"/><path d="M1866 591h30M1866 753h30" stroke="#6f737b"/>
      <path d="M1871 630q-3-8-9-13 2-3 6 0l3 4-2-15q2-3 4 0l2 12 0-17q2-4 5 0l1 17 3-15q3-3 4 0l-2 16 5-8q3-1 4 1l-6 12q-1 5-4 8h-12z"/>
      <path d="M1863 640l23 21M1885 640l-22 22M1862 645v-6h6M1880 639h6v6M1862 656v6h6"/><circle cx="1886" cy="661" r="7"/><path d="M1891 667l6 6" stroke-width="4"/>
      <path d="M1877 728v-23h-4l6-8 6 8h-4v23z"/><path d="M1872 709q-10 2-9 5 4 6 16 6t17-6q-1-4-10-5"/><path d="M1864 720l7-5v10z" fill="#484c55"/>
      <path d="M1863 760h8v8h-8zM1875 760h8v8h-8zM1887 760h8v8h-8zM1863 773h23v19h-23z"/><path d="M1869 777v11l10-5z" fill="#484c55"/><circle cx="1893" cy="811" r="5"/><path d="M1890 810h7"/>
    </svg>`;
  }

  private stage() {
    return html`<main class="stage">
      <div class="draw-area">
        ${this.drawing()}
        <div class="view"><button>[−]</button><button>[俯视]</button><button>[二维线框]</button></div>
        <div class="tip"><label for="dyn">输入注释文字的第一行 &lt;多行文字(M)&gt;:</label><span><input id="dyn" value="多行文字(M)"></span></div>
        <button class="wcs">WCS<svg width="12" height="7" viewBox="0 0 12 7"><path d="M1 1h10L6 6z" fill="none" stroke="#a9adb6"/></svg></button>
        ${this.navbar()}
        <div class="speed">
          <div class="rates">
            <div class="rate"><svg class="ico" width="12" height="12"><path d="M6 11V2M1 6l5-5 5 5" fill="none" stroke="#4aa8f0" stroke-width="2.500"/></svg>0.1<small>K/s</small></div>
            <div class="rate"><svg class="ico" width="12" height="12"><path d="M6 1v9M1 6l5 5 5-5" fill="none" stroke="#25a52c" stroke-width="2.500"/></svg>0<small>K/s</small></div>
          </div>
          <div class="dial">57<small>%</small>
            <svg viewBox="0 0 88 88" width="88" height="88"><defs><linearGradient id="g" x1="0" y1="0" x2="0" y2="1"><stop offset="0" stop-color="#3fb8b8"/><stop offset=".5" stop-color="#56c0b0"/><stop offset="1" stop-color="#cdbb3c"/></linearGradient></defs>
              <path d="M44 6A38 38 0 1 1 28 78.500" fill="none" stroke="url(#g)" stroke-width="2.500"/></svg></div>
        </div>
        <div class="hist">
          <p><span class="cjk">指定下一点</span>:</p><p><span class="cjk">指定下一点</span>:</p><p><span class="cjk">指定文字宽度</span> &lt;0&gt;:</p>
        </div>
        <div class="cmd">
          <div class="grip"><span class="dots"></span><button aria-label="关闭命令行">${icon("close")}</button><button aria-label="自定义">${icon("wrench")}</button></div>
          <button class="pick" aria-label="最近使用的命令">${icon("cmd")}${caret(8, "#777")}</button>
          <p><b>QLEADER</b> <span class="cjk">输入注释文字的第一行</span> &lt;<span class="cjk">多行文字</span>(M)&gt;:</p>
          <span class="bar"></span><input aria-label="命令">
          <button class="up" aria-label="历史记录">${caret(12, "#111")}</button>
        </div>
      </div>
      <div class="scroll"></div><div class="edge"></div>
    </main>`;
  }

  private mode(c: Cell) {
    return html`<button class=${classMap({ sc: true, on: !!c.on, sep: !!c.sep })} aria-label=${c.label} aria-pressed=${c.on ? "true" : "false"}>${icon(c.i)}</button>${
      c.menu ? html`<button class="sd" aria-label=${c.label + "设置"}>${caret(9)}</button>` : nothing}`;
  }

  render() {
    const shape = (w: number, sel: boolean) => html`<svg class="shape" width=${w} height="33" viewBox="0 0 ${w} 33"><defs><linearGradient id=${sel ? "t1" : "t0"} x1="0" y1="0" x2="0" y2="1"><stop offset="0" stop-color=${sel ? "#8c8c8c" : "#5a5a5a"}/><stop offset="1" stop-color=${sel ? "#626262" : "#4d4d4d"}/></linearGradient></defs>
      <path d="M0 33Q9 31 12 18L16 6Q18 0 25 0H${w - 22}Q${w - 16} 0 ${w - 14} 8L${w - 10} 22Q${w - 8} 32 ${w} 33z" fill=${sel ? "url(#t1)" : "url(#t0)"} stroke=${sel ? "#999" : "#666"}/></svg>`;
    return html`<div class="app">
      ${this.head()}
      <nav class="tabs">${TABS.map((t) => html`<button class=${classMap({ tab: true, sel: t === this.tab })} @click=${() => (this.tab = t)}>${t}</button>`)}
        <button class="pill" aria-label="最小化功能区"><span class="cap"><svg width="10" height="5"><path d="M0 5h10L5 0z" fill="#333"/></svg></span>${caret()}</button></nav>
      ${this.ribbon()}
      <div class="files">
        <button class="ftab">${shape(198, false)}<span>开始</span></button>
        <button class="ftab">${shape(206, true)}<span>4-18快速引线*</span><span><svg width="12" height="12" class="ico"><path d="M2 2l8 8M10 2l-8 8" stroke="#444" stroke-width="3"/></svg></span></button>
        <button class="add" aria-label="新图形"><svg width="12" height="12"><path d="M6 0v12M0 6h12" stroke="#ccc" stroke-width="3"/></svg></button>
      </div>
      <div class="strip"></div>
      ${this.stage()}
      <div class="layouts"><button class="ltab sel">模型</button><button class="ltab">布局1</button><button class="ltab">布局2</button>
        <button class="add" aria-label="新建布局"><svg width="12" height="12"><path d="M6 0v12M0 6h12" stroke="#ccc" stroke-width="3"/></svg></button></div>
      <footer class="sbar"><div class="status">
        <div class="grp coords">3069.2038, 1156.6894, 0.0000</div>
        <div class="grp"><button class="mdl">模型</button></div>
        <div class="grp">${this.mode({ i: "grid", label: "栅格", on: true })}${this.mode({ i: "snap", label: "捕捉", menu: true })}</div>
        <div class="grp">${MODES.map((c) => this.mode(c))}</div>
        <div class="grp">${this.mode({ i: "ducs", label: "动态 UCS", on: true })}${this.mode({ i: "filt", label: "选择过滤", menu: true })}${this.mode({ i: "gizmo", label: "小控件", on: true, menu: true })}</div>
        <div class="grp">${this.mode({ i: "annoVis", label: "注释可见性", on: true })}${this.mode({ i: "annoAuto", label: "自动缩放" })}${this.mode({ i: "anno", label: "注释比例" })}<button class="ratio">1:1${caret(10)}</button></div>
        <div class="grp">${this.mode({ i: "gear", label: "切换工作空间", menu: true })}${this.mode({ i: "plus", label: "注释监视器", sep: true })}</div>
        <div class="grp">${this.mode({ i: "ruler", label: "单位" })}<div class="units"><select aria-label="当前图形单位"><option>小数</option></select>${caret(10)}</div>${this.mode({ i: "props", label: "快捷特性", sep: true })}</div>
        <div class="grp">${this.mode({ i: "uilock", label: "锁定用户界面", menu: true })}${this.mode({ i: "isolate", label: "隔离对象", sep: true })}</div>
        <div class="grp">${this.mode({ i: "perf", label: "图形性能", on: true })}</div>
        <div class="grp"><button class="sc tall" aria-label="受信任的 DWG">${icon("trusted")}</button></div>
        <div class="grp last">${this.mode({ i: "clean", label: "全屏显示" })}${this.mode({ i: "burger", label: "自定义" })}</div>
      </div></footer>
    </div>`;
  }
}
